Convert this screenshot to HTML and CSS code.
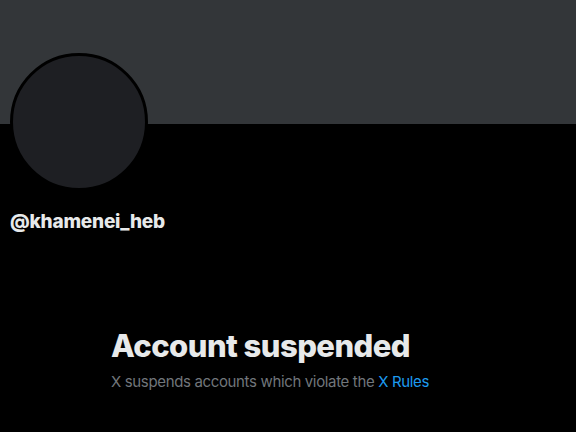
FILE: index.html
```html
<!doctype html>
<html>
<head>
    <meta charset="utf-8">
    <title>@khamenei_heb / X</title>
    <link rel="stylesheet" href="styles.css">
</head>
<body>

<div class="banner"></div>

<div class="profile">
    <div class="avatar"></div>
    <div class="handle">@khamenei_heb</div>
</div>

<div class="suspended">
    <h1>Account suspended</h1>
    <p>X suspends accounts which violate the <a href="#">X Rules</a></p>
</div>

</body>
</html>
```

FILE: styles.css
```css
html { background: #000; }
body {
    margin: 0;
    font-family: Inter, "Liberation Sans", sans-serif;
    color: #e7e9ea;
}
.banner { height: 124px; background: #333639; }
.profile { padding: 0 10px; }
.avatar {
    width: 132px; height: 132px;
    margin-top: -71px;
    border: 3px solid #000;
    border-radius: 50%;
    background: #1e1f23;
}
.handle {
    margin-top: 19px;
    font-size: 19px; font-weight: 800;
    letter-spacing: -0.2px;
}
.suspended { margin: 95px 0 0 111px; }
h1 {
    margin: 0;
    font-size: 31px; font-weight: 800;
    letter-spacing: -0.55px;
    line-height: 36px;
}
p {
    margin: 8px 0 0;
    font-size: 15px;
    letter-spacing: -0.35px;
    color: #71767b;
}
a { color: #1d9bf0; text-decoration: none; }
```
